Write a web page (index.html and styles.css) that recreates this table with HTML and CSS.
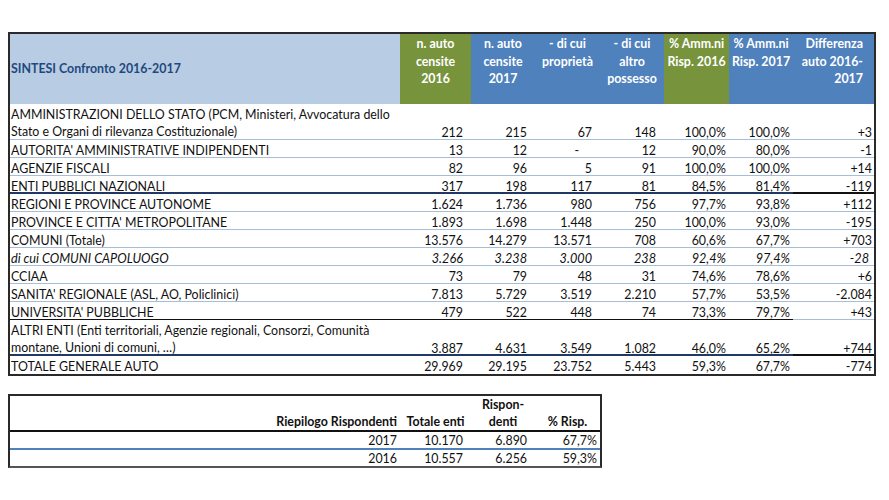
FILE: index.html
```html
<!DOCTYPE html>
<html lang="it">
<head>
<meta charset="utf-8">
<title>Sintesi Confronto 2016-2017</title>
<link rel="stylesheet" href="styles.css">
</head>
<body>
<div class="page">
  <div class="sheet">
    <div class="hrow">
      <div class="hc title">SINTESI Confronto 2016-2017</div>
      <div class="hc green">n. auto<br>censite<br>2016</div>
      <div class="hc blue">n. auto<br>censite<br>2017</div>
      <div class="hc blue">- di cui<br>proprietà</div>
      <div class="hc blue">- di cui<br>altro<br>possesso</div>
      <div class="hc green">% Amm.ni<br>Risp. 2016</div>
      <div class="hc blue">% Amm.ni<br>Risp. 2017</div>
      <div class="hc blue right">Differenza<br>auto 2016-<br>2017</div>
    </div>

    <div class="row tall">
      <div class="c lab">AMMINISTRAZIONI DELLO STATO (PCM, Ministeri, Avvocatura dello<br>Stato e Organi di rilevanza Costituzionale)</div>
      <div class="c n">212</div><div class="c n">215</div><div class="c n">67</div><div class="c n">148</div>
      <div class="c p">100,0%</div><div class="c p">100,0%</div><div class="c d">+3</div>
    </div>
    <div class="row">
      <div class="c lab">AUTORITA' AMMINISTRATIVE INDIPENDENTI</div>
      <div class="c n">13</div><div class="c n">12</div><div class="c n dash">-</div><div class="c n">12</div>
      <div class="c p">90,0%</div><div class="c p">80,0%</div><div class="c d">-1</div>
    </div>
    <div class="row">
      <div class="c lab">AGENZIE FISCALI</div>
      <div class="c n">82</div><div class="c n">96</div><div class="c n">5</div><div class="c n">91</div>
      <div class="c p">100,0%</div><div class="c p">100,0%</div><div class="c d">+14</div>
    </div>
    <div class="row navy">
      <div class="c lab">ENTI PUBBLICI NAZIONALI</div>
      <div class="c n">317</div><div class="c n">198</div><div class="c n">117</div><div class="c n">81</div>
      <div class="c p">84,5%</div><div class="c p">81,4%</div><div class="c d">-119</div>
    </div>
    <div class="row">
      <div class="c lab">REGIONI E PROVINCE AUTONOME</div>
      <div class="c n">1.624</div><div class="c n">1.736</div><div class="c n">980</div><div class="c n">756</div>
      <div class="c p">97,7%</div><div class="c p">93,8%</div><div class="c d">+112</div>
    </div>
    <div class="row">
      <div class="c lab">PROVINCE E CITTA' METROPOLITANE</div>
      <div class="c n">1.893</div><div class="c n">1.698</div><div class="c n">1.448</div><div class="c n">250</div>
      <div class="c p">100,0%</div><div class="c p">93,0%</div><div class="c d">-195</div>
    </div>
    <div class="row">
      <div class="c lab">COMUNI (Totale)</div>
      <div class="c n">13.576</div><div class="c n">14.279</div><div class="c n">13.571</div><div class="c n">708</div>
      <div class="c p">60,6%</div><div class="c p">67,7%</div><div class="c d">+703</div>
    </div>
    <div class="row ital">
      <div class="c lab">di cui COMUNI CAPOLUOGO</div>
      <div class="c n">3.266</div><div class="c n">3.238</div><div class="c n">3.000</div><div class="c n">238</div>
      <div class="c p">92,4%</div><div class="c p">97,4%</div><div class="c d">-28</div>
    </div>
    <div class="row">
      <div class="c lab">CCIAA</div>
      <div class="c n">73</div><div class="c n">79</div><div class="c n">48</div><div class="c n">31</div>
      <div class="c p">74,6%</div><div class="c p">78,6%</div><div class="c d">+6</div>
    </div>
    <div class="row">
      <div class="c lab">SANITA' REGIONALE (ASL, AO, Policlinici)</div>
      <div class="c n">7.813</div><div class="c n">5.729</div><div class="c n">3.519</div><div class="c n">2.210</div>
      <div class="c p">57,7%</div><div class="c p">53,5%</div><div class="c d">-2.084</div>
    </div>
    <div class="row black">
      <div class="c lab">UNIVERSITA' PUBBLICHE</div>
      <div class="c n">479</div><div class="c n">522</div><div class="c n">448</div><div class="c n">74</div>
      <div class="c p">73,3%</div><div class="c p">79,7%</div><div class="c d">+43</div>
    </div>
    <div class="row tall navy">
      <div class="c lab">ALTRI ENTI (Enti territoriali, Agenzie regionali, Consorzi, Comunità<br>montane, Unioni di comuni, …)</div>
      <div class="c n">3.887</div><div class="c n">4.631</div><div class="c n">3.549</div><div class="c n">1.082</div>
      <div class="c p">46,0%</div><div class="c p">65,2%</div><div class="c d">+744</div>
    </div>
    <div class="row last">
      <div class="c lab">TOTALE GENERALE AUTO</div>
      <div class="c n">29.969</div><div class="c n">29.195</div><div class="c n">23.752</div><div class="c n">5.443</div>
      <div class="c p">59,3%</div><div class="c p">67,7%</div><div class="c d">-774</div>
    </div>
  </div>

  <div class="summary">
    <div class="srow shead">
      <div class="sc">Riepilogo Rispondenti</div>
      <div class="sc ctr">Totale enti</div>
      <div class="sc ctr">Rispon-<br>denti</div>
      <div class="sc ctr">% Risp.</div>
    </div>
    <div class="srow sblue">
      <div class="sc plain">2017</div>
      <div class="sc num">10.170</div>
      <div class="sc num">6.890</div>
      <div class="sc pct">67,7%</div>
    </div>
    <div class="srow slast">
      <div class="sc plain">2016</div>
      <div class="sc num">10.557</div>
      <div class="sc num">6.256</div>
      <div class="sc pct">59,3%</div>
    </div>
  </div>
</div>
</body>
</html>
```

FILE: styles.css
```css
html, body {
  margin: 0;
  padding: 0;
  background: #ffffff;
}

body {
  font-family: Lato, "Open Sans", "Liberation Sans", sans-serif;
  font-size: 12.4px;
  color: #111;
}

.page {
  padding: 32px 0 0 8px;
}

.sheet {
  width: 868px;
  box-sizing: border-box;
  border: 2px solid #2a2a2a;
}

.hrow,
.row {
  display: grid;
  grid-template-columns: 390px 71px 64px 65px 64px 65px 64px 81px;
  grid-template-rows: 100%;
}

.hrow {
  height: 70px;
}

.hc {
  box-sizing: border-box;
  color: #ffffff;
  font-weight: bold;
  text-align: center;
  line-height: 17.5px;
  padding-top: 1px;
}

.hc.title {
  background: #b8cce4;
  color: #1f497d;
  text-align: left;
  display: flex;
  align-items: center;
  padding: 0 0 0 1px;
}

.hc.green { background: #77933c; }
.hc.blue { background: #4f81bd; }
.hc.right { text-align: right; padding-right: 11px; }

.row {
  height: 18px;
}

.row.tall {
  height: 36px;
}

.c {
  box-sizing: border-box;
  border-bottom: 1px solid #a7bedb;
  line-height: 17px;
  padding-top: 2px;
  white-space: nowrap;
  overflow: hidden;
  display: flex;
  align-items: flex-start;
  justify-content: flex-end;
}

.row.tall .c {
  padding-top: 20px;
}

.row.tall .c.lab,
.c.lab {
  padding-top: 2px;
  padding-left: 1px;
  display: block;
}

.c.n { padding-right: 8px; }
.c.p { padding-right: 3px; }
.c.d { padding-right: 2px; }
.c.dash { padding-right: 21px; }

.row.ital .c {
  font-style: italic;
  font-size: 12.7px;
  line-height: 16.5px;
}
.row.ital .c.d { padding-right: 5px; }

.row.navy .c {
  border-bottom: 2px solid #1f3864;
}
.row.navy .c.d {
  border-bottom-color: #111;
}

.row.black .c {
  border-bottom: 1px solid #111;
}
.row.black .c.d {
  border-bottom-color: #a7bedb;
}

.row.last .c {
  border-bottom: 0;
}

.summary {
  margin-top: 18px;
  width: 594px;
  box-sizing: border-box;
  border: 2px solid #2a2a2a;
  border-bottom-color: #555;
}

.srow {
  display: grid;
  grid-template-columns: 390px 71px 64px 65px;
  box-sizing: border-box;
  height: 18px;
}

.srow.shead {
  height: 36px;
  border-bottom: 2px solid #111;
}

.srow.sblue {
  border-bottom: 2px solid #4f81bd;
}

.srow.slast {
  height: 16px;
}

.sc {
  line-height: 17px;
  white-space: nowrap;
  display: flex;
  align-items: flex-end;
  justify-content: flex-end;
  padding-right: 3px;
}

.shead .sc {
  font-weight: bold;
  line-height: 17px;
}

.shead .sc.ctr {
  justify-content: flex-end;
  text-align: center;
  padding-right: 0;
  flex-direction: column;
  align-items: center;
}

.sc.num { padding-right: 8px; }
.sc.pct { padding-right: 3px; }
.sc.plain { padding-right: 3px; }
```
